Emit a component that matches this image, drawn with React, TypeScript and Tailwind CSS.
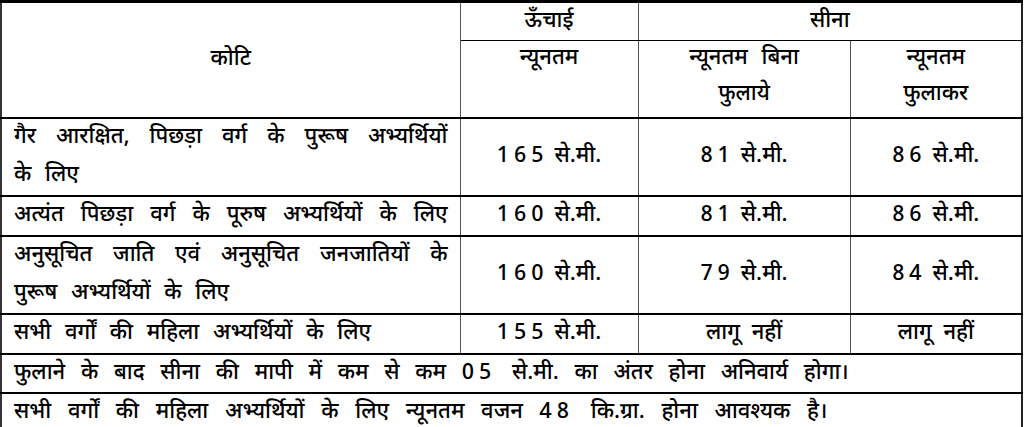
import React from "react";

const font = {
  fontFamily:
    '"Noto Sans Devanagari", "Lohit Devanagari", Mangal, "Noto Sans", "Liberation Sans", sans-serif',
};

function Num({ n, unit }: { n: string; unit: string }) {
  return (
    <span>
      <span className="tracking-[5px]">{n}</span>
      <span className="ml-[6px]">{unit}</span>
    </span>
  );
}

export default function App() {
  const rows = [
    {
      left: (
        <div className="px-[12px] leading-[38px]">
          <div className="text-justify [text-align-last:justify]">
            गैर आरक्षित, पिछड़ा वर्ग के पुरूष अभ्यर्थियों
          </div>
          <div className="[word-spacing:8px]">के लिए</div>
        </div>
      ),
      h: "h-[78px]",
      a: <Num n="165" unit="से.मी." />,
      b: <Num n="81" unit="से.मी." />,
      c: <Num n="86" unit="से.मी." />,
    },
    {
      left: (
        <div className="px-[12px] leading-[38px] text-justify [text-align-last:justify]">
          अत्यंत पिछड़ा वर्ग के पूरुष अभ्यर्थियों के लिए
        </div>
      ),
      h: "h-[39px]",
      a: <Num n="160" unit="से.मी." />,
      b: <Num n="81" unit="से.मी." />,
      c: <Num n="86" unit="से.मी." />,
    },
    {
      left: (
        <div className="px-[12px] leading-[38px]">
          <div className="text-justify [text-align-last:justify]">
            अनुसूचित जाति एवं अनुसूचित जनजातियों के
          </div>
          <div className="[word-spacing:8px]">पुरूष अभ्यर्थियों के लिए</div>
        </div>
      ),
      h: "h-[76px]",
      a: <Num n="160" unit="से.मी." />,
      b: <Num n="79" unit="से.मी." />,
      c: <Num n="84" unit="से.मी." />,
    },
    {
      left: (
        <div className="px-[12px] leading-[38px] [word-spacing:8px]">
          सभी वर्गों की महिला अभ्यर्थियों के लिए
        </div>
      ),
      h: "h-[39px]",
      a: <Num n="155" unit="से.मी." />,
      b: <span className="[word-spacing:6px]">लागू नहीं</span>,
      c: <span className="[word-spacing:6px]">लागू नहीं</span>,
    },
  ];

  return (
    <div className="w-[1024px] h-[427px] bg-white text-black" style={font}>
      <table className="table-fixed border-collapse w-[1021px] text-[22px] font-medium">
        <colgroup>
          <col className="w-[459px]" />
          <col className="w-[178px]" />
          <col className="w-[212px]" />
          <col className="w-[172px]" />
        </colgroup>
        <thead>
          <tr className="h-[39px]">
            <th
              rowSpan={2}
              className="border-t-[3px] border-t-black border-l-2 border-l-[#333] border-r border-r-[#555] border-b-2 border-b-black font-medium text-center align-middle"
            >
              कोटि
            </th>
            <th className="border-t-[3px] border-t-black border-r border-r-[#555] border-b border-b-black font-medium text-center align-middle leading-[36px]">
              ऊँचाई
            </th>
            <th
              colSpan={2}
              className="border-t-[3px] border-t-black border-r-2 border-r-[#222] border-b border-b-black font-medium text-center align-middle leading-[36px]"
            >
              सीना
            </th>
          </tr>
          <tr className="h-[77px]">
            <th className="border-r border-r-[#555] border-b-2 border-b-black font-medium text-center align-top leading-[36px]">
              न्यूनतम
            </th>
            <th className="border-r border-r-[#555] border-b-2 border-b-black font-medium text-center align-top leading-[36px] [word-spacing:8px]">
              न्यूनतम बिना
              <br />
              फुलाये
            </th>
            <th className="border-r-2 border-r-[#222] border-b-2 border-b-black font-medium text-center align-top leading-[36px]">
              न्यूनतम
              <br />
              फुलाकर
            </th>
          </tr>
        </thead>
        <tbody>
          {rows.map((r, i) => (
            <tr key={i} className={r.h}>
              <td className="border-l-2 border-l-[#333] border-r border-r-[#555] border-b-2 border-b-black align-middle p-0">
                {r.left}
              </td>
              <td className="border-r border-r-[#555] border-b-2 border-b-black text-center align-middle p-0">
                {r.a}
              </td>
              <td className="border-r border-r-[#555] border-b-2 border-b-black text-center align-middle p-0">
                {r.b}
              </td>
              <td className="border-r-2 border-r-[#222] border-b-2 border-b-black text-center align-middle p-0">
                {r.c}
              </td>
            </tr>
          ))}
          <tr className="h-[39px]">
            <td
              colSpan={4}
              className="border-l-2 border-l-[#333] border-r-2 border-r-[#222] border-b-2 border-b-black px-[12px] align-middle [word-spacing:10px]"
            >
              फुलाने के बाद सीना की मापी में कम से कम{" "}
              <span className="tracking-[5px]">05</span> से.मी. का अंतर होना
              अनिवार्य होगा।
            </td>
          </tr>
          <tr className="h-[39px]">
            <td
              colSpan={4}
              className="border-l-2 border-l-[#333] border-r-2 border-r-[#222] border-b-2 border-b-black px-[12px] align-middle [word-spacing:11px]"
            >
              सभी वर्गों की महिला अभ्यर्थियों के लिए न्यूनतम वजन{" "}
              <span className="tracking-[5px]">48</span> कि.ग्रा. होना आवश्यक
              है।
            </td>
          </tr>
        </tbody>
      </table>
    </div>
  );
}
